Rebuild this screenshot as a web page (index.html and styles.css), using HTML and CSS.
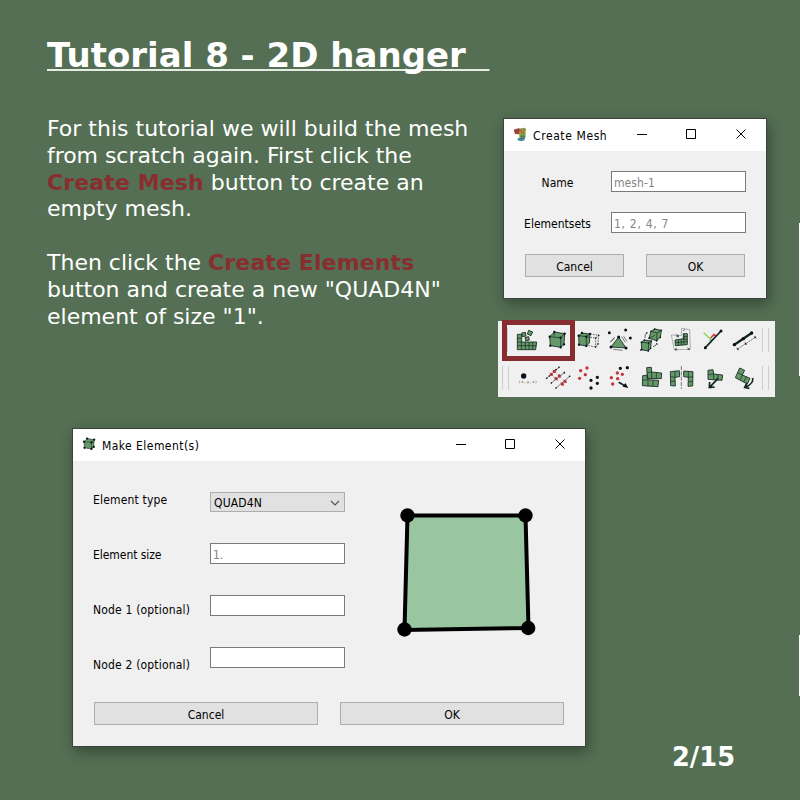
FILE: index.html
```html
<!DOCTYPE html>
<html lang="en">
<head>
<meta charset="utf-8">
<title>Tutorial 8 - 2D hanger</title>
<link rel="stylesheet" href="styles.css">
</head>
<body>
<main class="slide">
  <h1 class="title">Tutorial 8 - 2D hanger  </h1>
  <div class="intro">
    <div class="copy">
      <p>For this tutorial we will build the mesh<br><span class="snug">from scratch again. First click the</span><br><b>Create Mesh</b> button to create an<br>empty mesh.</p>
      <p>Then click the <b>Create Elements</b><br>button and create a new "QUAD4N"<br>element of size "1".</p>
    </div>
    <div class="side">
      <section class="window mesh-window">
        <header class="titlebar">
          <svg class="app-icon" viewBox="0 0 42 45" width="14" height="15">
            <path d="M2 8L16 4L28 10L24 22L6 21Z" fill="#b9383c"/><path d="M15 5L36 2L40 9L28 12Z" fill="#8f9350"/>
            <path d="M18 13L38 8V20L18 25Z" fill="#e0b52c"/><path d="M19 23L38 18L37 31L20 34Z" fill="#78a94b"/><path d="M14 34L37 29L34 40L23 43L14 40Z" fill="#4292ad"/>
            <path d="M3 13L26 15L39 9M16 20L38 15M19 28H38M16 35L36 32M26 9V42M32 8V40M10 6V20M17 5V22" fill="none" stroke="#59583f" stroke-width="1.5"/>
          </svg>
          <span class="caption">Create Mesh</span>
          <svg class="controls" viewBox="0 0 120 12" width="120" height="12"><path d="M4 6.5H14M53.5 1.5H62.5V10.500H53.500ZM103.500 1.500L112.500 10.500M112.500 1.500L103.500 10.500"/></svg>
        </header>
        <div class="mesh-form">
          <label>Name</label><div class="field">mesh-1</div>
          <label>Elementsets</label><div class="field">1, 2, 4, 7</div>
        </div>
        <div class="buttons"><div class="button">Cancel</div><div class="button">OK</div></div>
      </section>
      <section class="toolbar">
        <div class="tools">
          <i class="grip"></i>
          <svg viewBox="48 18 93 114"><path class="block" d="M67 58H80V81H125L122 104H67ZM80 54L91 52L93 63L82 65ZM101 46L113 51L108 62L97 57ZM90 67L101 65L103 75L92 78Z"/><path class="ink" d="M67 70H80M67 81H80M67 92H124M79 81V104M91 81V104M102 81V104M113 81V104"/></svg>
          <svg viewBox="141 18 93 114"><path class="block" d="M164 65L178 51L209 56L207 88L197 97L166 92Z"/><path class="ink" d="M164 65L197 68L209 56M197 68V97M178 51L177 62"/><path class="nodes" d="M164 65h0M178 51h0M209 56h0M207 88h0M197 97h0M166 92h0M197 68h0"/></svg>
          <svg viewBox="234 18 93 114"><path class="block" d="M251 62L261 54L285 57L283 84L274 93L252 89Z"/><path class="ink" d="M251 62L274 65L285 57M274 65V93"/><path class="nodes" d="M251 62h0M261 54h0M285 57h0M274 93h0M252 89h0M274 65h0"/><path class="ink" stroke-dasharray="5 3" d="M286 57L311 61L309 87L302 96L277 91M278 66L302 69L311 61M302 69V96"/><path class="nodes small" d="M302 69h0M311 61h0M309 87h0M302 96h0"/></svg>
          <svg viewBox="327 18 93 114"><path class="block" d="M371 66L348 96L393 99Z"/><path class="nodes big" d="M371 66h0M348 96h0M393 99h0M343 53h0M392 45h0M406 69h0"/><path class="ink thin" d="M345 82L359 66M349 80L358 70M380 65L391 82M386 64L396 79M355 103L383 106"/></svg>
          <svg viewBox="0 18 93 114"><path class="block" d="M48 49L59 42L79 46L76 67L65 77L42 70ZM19 82L28 75L49 78L47 100L40 108L20 104Z"/><path class="ink" d="M48 49L66 54L79 46M66 54L65 77M42 70L60 61M19 82L41 84L49 78M41 84L40 108"/><path class="nodes small" d="M48 49h0M59 42h0M79 46h0M76 67h0M65 77h0M42 70h0M19 82h0M28 75h0M49 78h0M47 100h0M40 108h0M20 104h0M41 84h0M17 105h0"/><path class="ink" d="M30 69Q28 58 37 53M54 95Q63 93 66 85M35 57L37 53L32 54M63 87L66 85L67 90"/></svg>
          <svg viewBox="93 18 93 114"><path class="ink thin gray" d="M109 60L139 62L140 40L164 44L166 102L118 105Z"/><path class="block" d="M120 75L145 71V56H157V89L121 92Z"/><path class="ink" d="M121 83L157 80M130 74V91M139 73V90M147 57V89M145 65H157M145 73H157"/><path class="ink" d="M130 66L124 57M130 66L129 59M130 66L124 65M125 98L120 105M120 105L127 103M158 97L164 104M164 104L157 103M144 48L150 43"/></svg>
          <svg viewBox="186 18 93 114"><path d="M206 53L230 76" fill="none" stroke="#86d84b" stroke-width="4"/><path d="M227 69L237 58L243 64" fill="none" stroke="#d93a3f" stroke-width="5"/><path d="M224 74L229 79" stroke="#62c9ec" stroke-width="5"/><path class="ink heavy" d="M211 98L258 48"/><path class="nodes big" d="M211 98h0M258 48h0"/></svg>
          <svg viewBox="279 18 93 114"><path class="ink rod" d="M298 89L350 54"/><path class="nodes large" d="M298 89h0M325 71h0M350 54h0"/><path class="ink thin" stroke-dasharray="6 2" d="M308 102L361 67"/><path class="nodes small" d="M308 102h0M332 86h0M361 67h0"/><path class="ink thin" d="M305 98L311 106M357 63L364 71M329 82L335 90"/></svg>
          <i class="grip end"></i><i class="grip"></i>
          <span class="highlight"></span>
        </div>
        <div class="tools second">
          <i class="grip"></i><i class="grip"></i>
          <svg viewBox="48 132 93 114"><circle cx="86" cy="183" r="8" fill="#07121c"/><text x="72" y="204" textLength="53">(x,y,z)</text></svg>
          <svg viewBox="141 132 93 114"><path class="ink thin" d="M154 191L193 156M168 205L209 172M182 220L225 183"/><path class="nodes small" d="M155 190h0M192 157h0M163 183h0M183 164h0M169 204h0M208 173h0M183 219h0M224 184h0"/><path class="red-nodes" d="M169 178h0M178 169h0M183 191h0M193 183h0M202 207h0M210 199h0"/><path class="redline" d="M164 174L175 184M173 165L184 174M178 187L189 196M188 178L199 188M197 203L207 212M205 194L216 204"/></svg>
          <svg viewBox="234 132 93 114"><path class="red-nodes" d="M276 159h0M257 167h0M271 179h0M254 190h0"/><path class="nodes large" d="M307 187h0M288 196h0M307 205h0M288 219h0"/></svg>
          <svg viewBox="327 132 93 114"><path class="red-nodes" d="M367 174h0M382 178h0M349 188h0M368 191h0M353 207h0"/><path class="nodes large" d="M376 160h0M397 158h0"/><path class="ink heavy" d="M371 202L391 213"/><path d="M400 219L383 215L391 204Z" fill="#07121c"/></svg>
          <svg viewBox="0 132 93 114"><path class="block" d="M35 158L49 157L50 171L80 174L79 191L37 190ZM23 182L37 180L39 194L71 196L69 215L22 212Z"/><path class="ink" d="M36 173L50 171V191M64 173V191M23 196L39 194V214M54 195V214"/></svg>
          <svg viewBox="93 132 93 114"><path class="block" d="M106 170L133 167L134 185L120 187L121 213L107 212ZM146 168L174 170L173 213L159 214L160 187L146 185Z"/><path class="ink" d="M120 168V187L107 185M107 199H120M160 169V187L174 185M160 200H173"/><path class="ink thin" stroke-dasharray="12 4" d="M139 153V222"/></svg>
          <svg viewBox="186 132 93 114"><path class="block" d="M219 166L234 164L236 177L263 180L261 196L219 193Z"/><path class="ink" d="M219 179L236 177V194M249 179V196"/><path class="ink heavy" d="M249 190L226 215M224 201L223 218L239 216"/></svg>
          <svg viewBox="279 132 93 114"><path class="block" d="M314 159L329 166L322 180L345 190L337 207L301 188Z"/><path class="ink" d="M308 173L322 180L315 195M334 185L326 201"/><path class="ink heavy" d="M353 189Q356 206 332 216M336 204L329 217L343 220"/></svg>
          <i class="grip end"></i><i class="grip"></i>
        </div>
      </section>
    </div>
  </div>

  <section class="window element-window">
    <header class="titlebar">
      <svg class="app-icon" viewBox="155 45 62 60" width="14" height="14"><path class="block" d="M164 65L178 51L209 56L207 88L197 97L166 92Z"/><path class="ink" d="M164 65L197 68L209 56M197 68V97"/><path class="nodes large" d="M164 65h0M178 51h0M209 56h0M207 88h0M197 97h0M166 92h0M197 68h0"/></svg>
      <span class="caption">Make Element(s)</span>
      <svg class="controls" viewBox="0 0 120 12" width="120" height="12"><path d="M4 6.5H14M53.5 1.5H62.5V10.500H53.500ZM103.500 1.500L112.500 10.500M112.500 1.500L103.500 10.500"/></svg>
    </header>
    <div class="element-body">
      <div class="labels"><label>Element type</label><label>Element size</label><label>Node 1 (optional)</label><label>Node 2 (optional)</label></div>
      <div class="inputs">
        <div class="select">QUAD4N<svg viewBox="0 0 10 6" width="10" height="6"><path d="M1 1L5 5L9 1" fill="none" stroke="#555" stroke-width="1.2"/></svg></div>
        <div class="field">1.</div><div class="field"></div><div class="field"></div>
      </div>
      <svg class="quad" viewBox="0 0 146 132" width="146" height="132"><path d="M12.500 10.500H130.500L133.500 123L9.500 125Z" fill="#99c6a1" stroke="#000" stroke-width="4"/><circle cx="12.500" cy="10.500" r="7.200"/><circle cx="130.500" cy="10.500" r="7.200"/><circle cx="133.200" cy="123" r="7.200"/><circle cx="9.500" cy="124.500" r="7.200"/></svg>
    </div>
    <div class="buttons"><div class="button">Cancel</div><div class="button">OK</div></div>
  </section>
  <footer class="page-number">2/15</footer>
  <span class="edge upper"></span><span class="edge lower"></span>
</main>
</body>
</html>
```
FILE: styles.css
```css
* { box-sizing: border-box; }
body { margin: 0; }
.slide {
  position: relative;
  width: 800px;
  height: 800px;
  overflow: hidden;
  background: #546f53;
  color: #fff;
  font-family: "DejaVu Sans", sans-serif;
  display: flex;
  flex-direction: column;
}
.title {
  margin: 35px 0 0 47px;
  height: 40px;
  font-size: 34px;
  line-height: 40px;
  white-space: pre;
  text-decoration: underline #e6ece4;
  text-decoration-thickness: 2px;
  text-underline-offset: 2px;
  text-decoration-skip-ink: none;
}
.intro { display: flex; margin-top: 40px; height: 313px; }
.copy { flex: none; width: 498px; padding: 1px 0 0 47px; font-size: 22px; line-height: 26.8px; white-space: nowrap; }
.copy p { margin: 0 0 26.8px; }
.copy b { color: #892e2f; letter-spacing: .12px; }
.snug { letter-spacing: -.05px; }
.side { padding-top: 3px; }

.window {
  background: #f0f0f0;
  border: 1px solid #39443a;
  color: #000;
  font: 12px/16px "DejaVu Sans Condensed", "DejaVu Sans", sans-serif;
  box-shadow: 2px 5px 13px rgba(0, 0, 0, .35);
}
.titlebar { display: flex; align-items: center; height: 32px; background: #fff; }
.app-icon { margin: 0 6px 2px 9px; }
.caption { padding-top: 1px; letter-spacing: .45px; }
.mesh-window .caption { letter-spacing: .6px; }
.controls { margin: 0 13px 2px auto; }
.controls path { fill: none; stroke: #000; stroke-width: 1; }
.field, .select, .button { white-space: pre; border: 1px solid #7a7a7a; }
.field { height: 21px; width: 135px; background: #fff; color: #858585; padding: 3px 2px 0; }
.mesh-window .field { letter-spacing: .1px; }
.mesh-window .field:last-child { letter-spacing: .7px; }
.button { height: 23px; background: #e1e1e1; border-color: #adadad; text-align: center; padding-top: 4px; }

.mesh-window { width: 264px; height: 181px; margin-left: 5px; }
.mesh-form { display: grid; grid-template-columns: 107px 135px; row-gap: 20px; padding-top: 20px; }
.mesh-form label { text-align: center; padding-top: 4px; }
.mesh-window .buttons { display: grid; grid-template-columns: 99px 99px; gap: 22px; margin: 21px 0 0 21px; }

.toolbar { width: 277px; height: 76px; margin-top: 22px; background: #f0f0f0; }
.tools { position: relative; display: flex; height: 38px; padding-left: 9px; }
.tools svg { width: 31px; height: 38px; flex: none; }
.tools text { font: 10px "DejaVu Sans", sans-serif; fill: #07121c; }
.grip { width: 1px; height: 24px; margin: 7px 3px 0 0; background: #cecece; }
.second { padding-left: 4px; }
.second .grip:first-child { margin-right: 5px; }
.second .grip:nth-child(2) { margin-right: 2px; }
.grip.end { margin-left: 3px; margin-right: 5px; }
.highlight { position: absolute; left: 4px; top: -1px; width: 73px; height: 41px; border: 5px solid #882d2f; }

.block { fill: #659969; stroke: #13251e; stroke-width: 2.5; stroke-linejoin: round; }
.ink { fill: none; stroke: #13231f; stroke-width: 2; }
.thin { stroke-width: 1.7; }
.gray { stroke: #747b7a; }
.heavy { stroke-width: 5; }
.rod { stroke-width: 7; }
.nodes, .red-nodes { fill: none; stroke: #07121c; stroke-width: 7; stroke-linecap: round; }
.small { stroke-width: 5; }
.big { stroke-width: 9; }
.large { stroke-width: 10; }
.red-nodes { stroke: #c33337; stroke-width: 10; }
.redline { fill: none; stroke: #8f3338; stroke-width: 2; }

.element-window { width: 514px; height: 319px; margin-left: 72px; }
.element-body { display: flex; height: 241px; padding-left: 20px; }
.labels { display: grid; grid-auto-rows: 55px; width: 117px; padding-top: 31px; align-content: start; letter-spacing: .18px; }
.labels label:nth-child(2) { letter-spacing: -.05px; }
.inputs { padding-top: 31px; }
.inputs .field { margin-bottom: 31px; }
.select { display: flex; align-items: center; justify-content: space-between; width: 135px; height: 20px; margin-bottom: 31px; padding: 1px 4px 0 3px; background: #e1e1e1; border-color: #adadad; letter-spacing: .15px; }
.quad { margin: 44px 0 0 50px; }
.element-window .buttons { display: grid; grid-template-columns: 224px 224px; gap: 22px; margin-left: 21px; }
.page-number { margin: -5px 0 0 672px; font-size: 25.7px; line-height: 30px; font-weight: bold; }
.edge { position: absolute; left: 799px; width: 1px; background: #fff; }
.upper { top: 223px; height: 153px; }
.lower { top: 635px; height: 61px; }
```
